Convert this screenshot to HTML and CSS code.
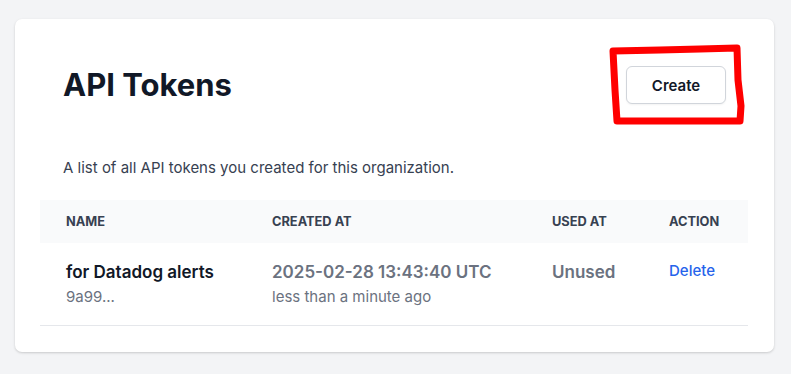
FILE: index.html
```html
<!DOCTYPE html>
<html lang="en">
<head>
<meta charset="utf-8">
<title>API Tokens</title>
<link rel="stylesheet" href="styles.css">
</head>
<body>
<div class="page">
  <section class="card">
    <div class="card-head">
      <h1 class="title">API Tokens</h1>
      <button class="btn" type="button">Create</button>
    </div>
    <p class="desc">A list of all API tokens you created for this organization.</p>
    <div class="table">
      <div class="thead">
        <div class="th">Name</div>
        <div class="th">Created at</div>
        <div class="th">Used at</div>
        <div class="th">Action</div>
      </div>
      <div class="tr">
        <div class="td">
          <div class="main dark">for Datadog alerts</div>
          <div class="sub">9a99...</div>
        </div>
        <div class="td">
          <div class="main">2025-02-28 13:43:40 UTC</div>
          <div class="sub">less than a minute ago</div>
        </div>
        <div class="td">
          <div class="main">Unused</div>
        </div>
        <div class="td">
          <a class="link" href="#">Delete</a>
        </div>
      </div>
    </div>
  </section>
</div>
<svg class="mark" width="791" height="374" viewBox="0 0 791 374" aria-hidden="true">
  <path d="M613 51 L660 50 L700 49 L737 48 L738 80 L741 106 L740 121 L700 121 L660 121 L617 121 L615 90 L613 51 Z" fill="none" stroke="#ff0000" stroke-width="7" stroke-linejoin="round" stroke-linecap="round"/>
</svg>
</body>
</html>
```

FILE: styles.css
```css
* { box-sizing: border-box; }
html, body { margin: 0; padding: 0; }
body {
  background: #f3f4f6;
  font-family: Inter, "Noto Sans", "Liberation Sans", sans-serif;
  color: #111827;
  width: 791px;
  height: 374px;
  overflow: hidden;
  position: relative;
}
.page {
  padding: 19px 17px 0 15px;
}
.card {
  background: #ffffff;
  border-radius: 7px;
  box-shadow: 0 1px 3px rgba(0,0,0,0.12), 0 1px 2px rgba(0,0,0,0.06);
  padding: 47px 26px 27px 25px;
  height: 333px;
}
.card-head {
  display: flex;
  align-items: center;
  justify-content: space-between;
  height: 38px;
  padding: 0 22px 0 23px;
}
.title {
  margin: 0;
  font-size: 31px;
  line-height: 36px;
  font-weight: 700;
  color: #111827;
}
.btn {
  width: 100px;
  height: 38px;
  background: #fff;
  border: 1px solid #d1d5db;
  border-radius: 6px;
  box-shadow: 0 1px 2px rgba(0,0,0,0.05);
  font-family: inherit;
  font-size: 15px;
  font-weight: 600;
  color: #111827;
  padding: 0;
}
.desc {
  margin: 54px 0 0 23px;
  font-size: 15px;
  line-height: 20px;
  color: #374151;
}
.table {
  margin-top: 22px;
}
.thead, .tr {
  display: grid;
  grid-template-columns: 206px 280px 117px 105px;
}
.thead {
  background: #f9fafb;
  height: 43px;
  align-items: center;
}
.th {
  padding-left: 26px;
  font-size: 12.8px;
  line-height: 16px;
  font-weight: 700;
  text-transform: uppercase;
  color: #374151;
}
.tr {
  height: 83px;
  border-bottom: 1px solid #e5e7eb;
}
.td {
  padding: 17px 0 0 26px;
}
.main {
  font-size: 17px;
  line-height: 24px;
  font-weight: 600;
  color: #6b7280;
}
.main.dark { color: #111827; }
.sub {
  margin-top: 3px;
  font-size: 15px;
  line-height: 20px;
  color: #6b7280;
}
.link {
  display: block;
  font-size: 15px;
  line-height: 22px;
  font-weight: 500;
  color: #2563eb;
  text-decoration: none;
}
.mark {
  position: absolute;
  left: 0;
  top: 0;
  pointer-events: none;
}
```
